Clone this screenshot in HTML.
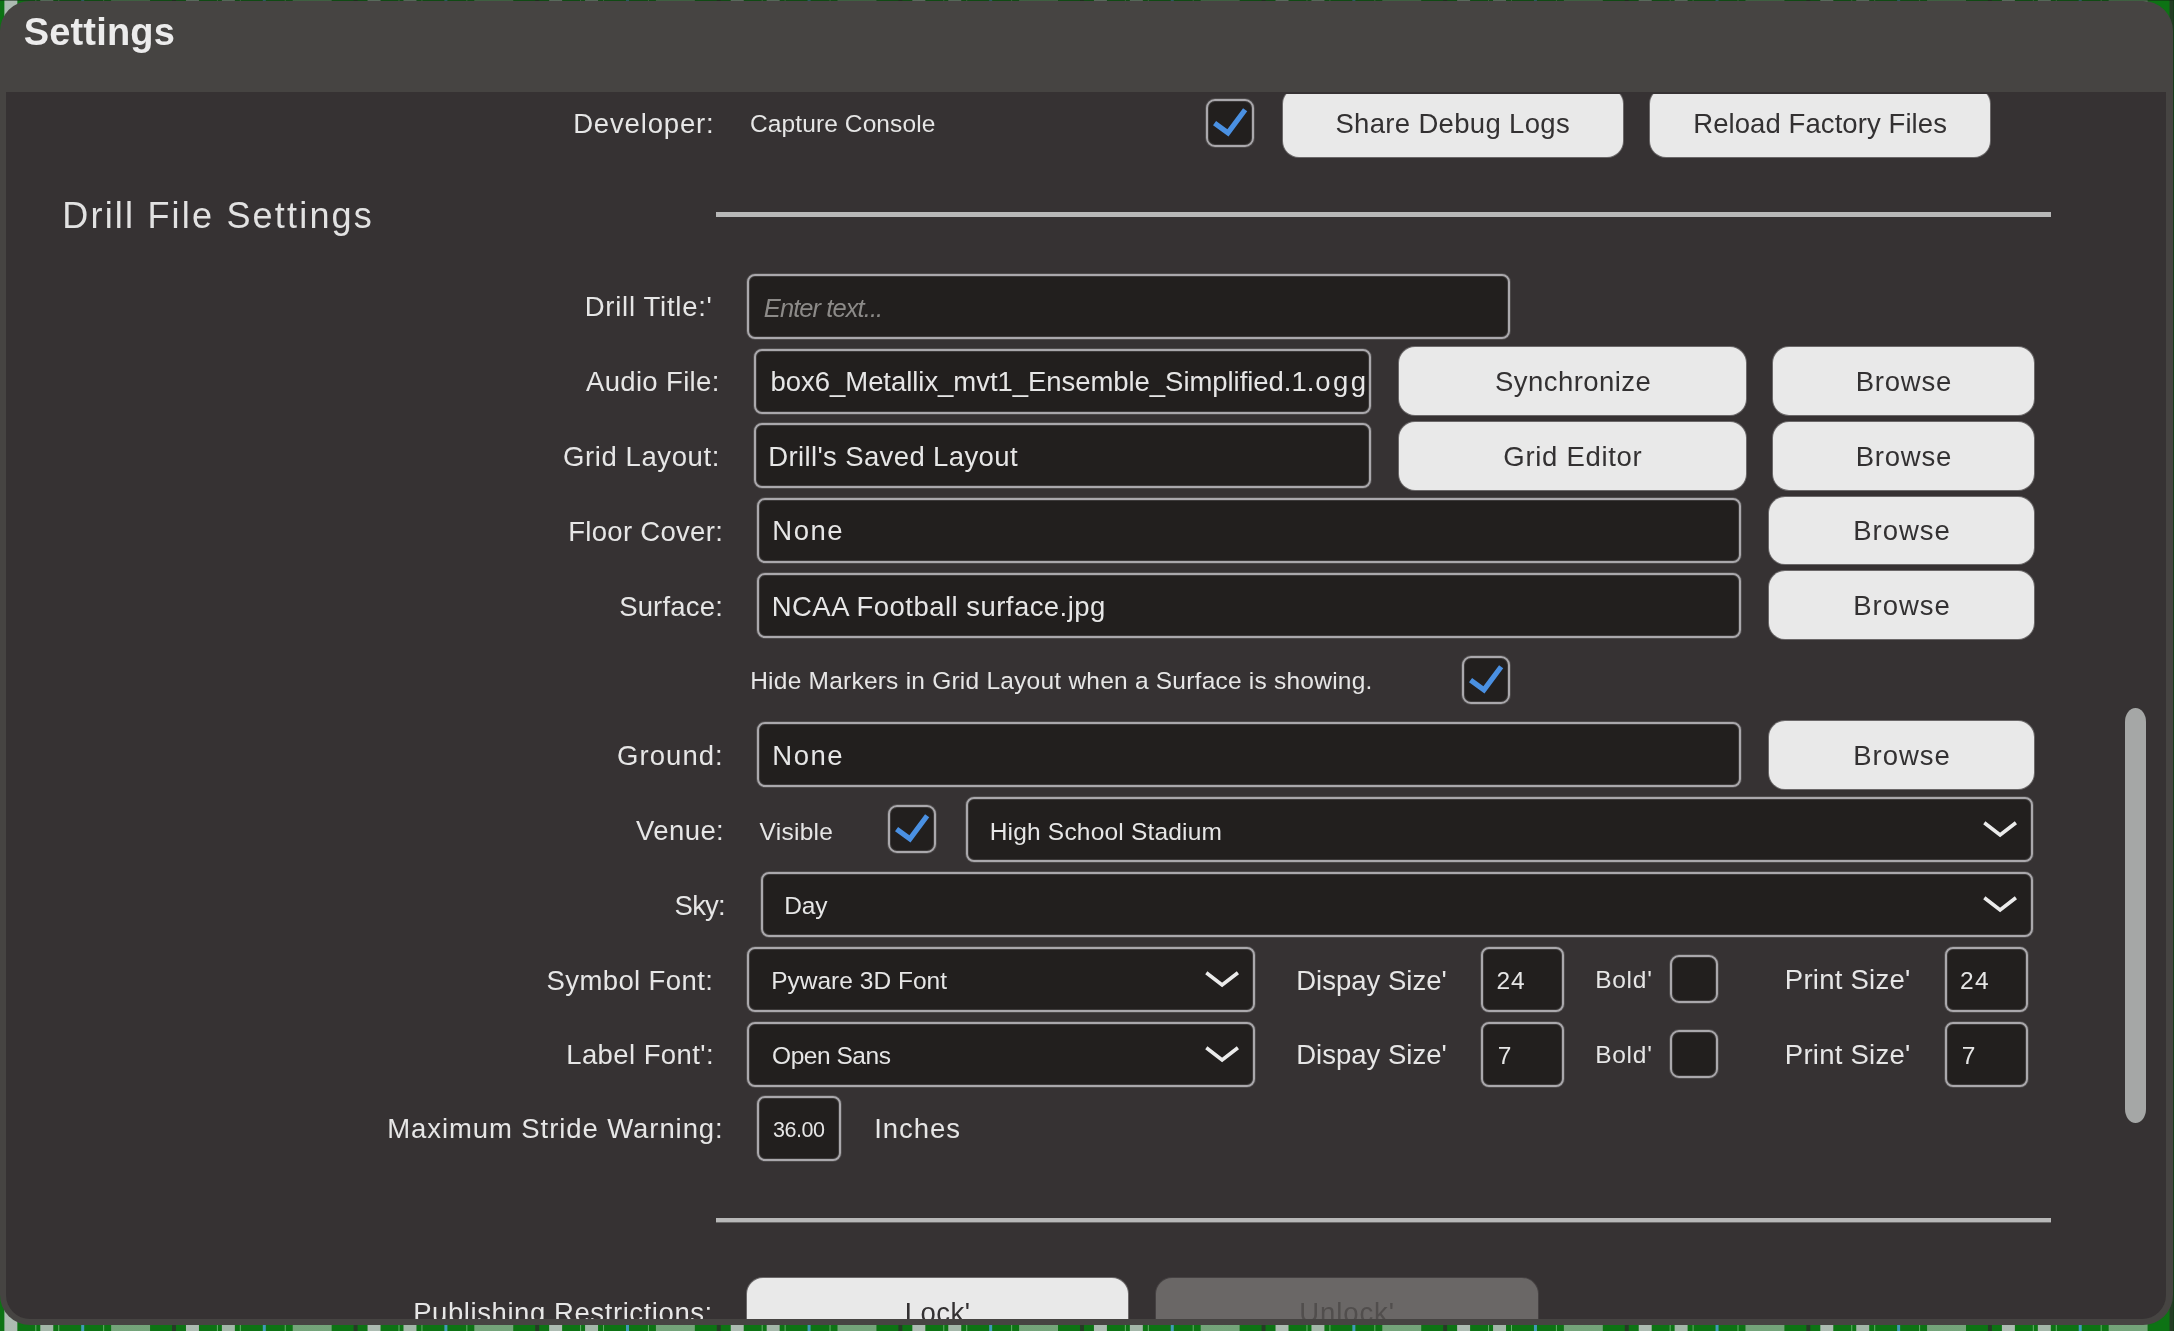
<!DOCTYPE html>
<html lang="en">
<head>
<meta charset="utf-8">
<title>Settings</title>
<style>
html,body{margin:0;padding:0}
body{width:2174px;height:1331px;overflow:hidden;position:relative;background:#12781a;font-family:"Liberation Sans",sans-serif}
#field{position:absolute;left:0;top:0;width:2174px;height:1331px;background-color:#0d7314;
 background-image:repeating-linear-gradient(90deg,transparent 0.0px,rgba(40,50,40,.85) 0.0px,rgba(40,50,40,.85) 3.5px,transparent 3.5px,transparent 14.0px,rgba(200,200,205,.85) 14.0px,rgba(200,200,205,.85) 27.0px,transparent 27.0px,transparent 44.9px,rgba(190,235,195,.5) 44.9px,rgba(190,235,195,.5) 46.1px,transparent 46.1px,transparent 50.0px,rgba(200,200,205,.8) 50.0px,rgba(200,200,205,.8) 63.0px,transparent 63.0px,transparent 67.6px,rgba(190,235,195,.5) 67.6px,rgba(190,235,195,.5) 68.8px,transparent 68.8px,transparent 90.8px,rgba(70,160,200,.9) 90.8px,rgba(70,160,200,.9) 93.5px,transparent 93.5px,transparent 113.0px,rgba(190,235,195,.5) 113.0px,rgba(190,235,195,.5) 114.2px,transparent 114.2px,transparent 121.0px,rgba(200,205,205,.55) 121.0px,rgba(200,205,205,.55) 160.0px,transparent 160.0px,transparent 181.6px);background-position:-9.6px 0;background-size:181.6px 100%}
#edgeT{position:absolute;left:0;top:0;width:2174px;height:1px;background:rgba(20,40,20,.55)}
#edgeR{position:absolute;left:2173px;top:0;width:1px;height:1331px;background:rgba(20,40,20,.55)}
#dlg{position:absolute;left:0;top:1px;width:2173px;height:1324px;background:#464442;border-radius:30px;overflow:hidden;will-change:transform}
#title{position:absolute;white-space:nowrap;line-height:60px;height:60px;font-weight:bold;color:#ececec}
#pane{position:absolute;left:6px;top:91px;width:2160px;height:1227px;background:#363233;border-radius:0 0 24px 24px;overflow:hidden}
#view{position:absolute;left:0;top:2px;width:2160px;height:1225px;overflow:hidden}
#abs{position:absolute;left:-6px;top:-94px;width:2174px;height:1331px}
.t{position:absolute;white-space:nowrap;line-height:60px;height:60px}
.in{position:absolute;box-sizing:border-box;background:#221f1e;border:2px solid #aaa8ac;border-radius:8px;box-shadow:0 0 0 1px rgba(170,168,172,.2),inset 0 0 0 1px rgba(170,168,172,.2)}
.clip{overflow:hidden}
.btn{position:absolute;background:#e9e9e9;border-radius:16px;box-shadow:0 0 0 1px rgba(233,233,233,.3)}
.dis{background:#6a6766;box-shadow:0 0 0 1px rgba(106,103,102,.3)}
.cb{position:absolute;box-sizing:border-box;background:#221f1e;border:2px solid #aaa8ac;border-radius:9px;box-shadow:0 0 0 1px rgba(170,168,172,.2),inset 0 0 0 1px rgba(170,168,172,.2)}
.cb svg{position:absolute;left:-2px;top:-2px}
.chev{position:absolute}
.hr{position:absolute;background:#b8b8b8}
.sb{position:absolute;background:#a5a7a6;border-radius:10.5px/14px}
</style>
</head>
<body>
<div id="field"></div><div id="edgeT"></div><div id="edgeR"></div>
<div id="dlg">
<span class="t" style="left:23.64px;top:0.93px;font-size:38px;letter-spacing:0.198px;color:#ececec;font-weight:bold;">Settings</span>
<div id="pane"><div id="view"><div id="abs">
<span class="t" style="left:573.18px;top:93.67px;font-size:27.5px;letter-spacing:0.840px;color:#e6e6e6;">Developer:</span>
<span class="t" style="left:750.06px;top:94.11px;font-size:24.5px;letter-spacing:0.102px;color:#e6e6e6;">Capture Console</span>
<div class="cb" style="left:1206px;top:99px;width:48px;height:48px;"><svg width="48" height="48" viewBox="0 0 48 48"><path d="M8.55 24.1 L21.95 33.8 L39.15 10.7" fill="none" stroke="#4a90e2" stroke-width="5.2" stroke-linejoin="miter"/></svg></div>
<div class="btn" style="left:1283px;top:88px;width:340px;height:69px;"></div>
<span class="t" style="left:1335.39px;top:93.67px;font-size:27.5px;letter-spacing:0.330px;color:#333132;">Share Debug Logs</span>
<div class="btn" style="left:1650px;top:88px;width:340px;height:69px;"></div>
<span class="t" style="left:1693.20px;top:93.67px;font-size:27.5px;letter-spacing:0.083px;color:#333132;">Reload Factory Files</span>
<div class="hr" style="left:716px;top:212px;width:1335px;height:5px;"></div>
<span class="t" style="left:62.28px;top:185.63px;font-size:36px;letter-spacing:2.194px;color:#e2e2e2;">Drill File Settings</span>
<span class="t" style="left:584.72px;top:277.17px;font-size:27.5px;letter-spacing:0.734px;color:#e6e6e6;">Drill Title:&#x27;</span>
<div class="in" style="left:747px;top:274px;width:763px;height:65px;"></div>
<span class="t" style="left:763.84px;top:278.36px;font-size:25.5px;letter-spacing:-0.923px;color:#8c8a88;font-style:italic;">Enter text...</span>
<span class="t" style="left:585.98px;top:352.27px;font-size:27.5px;letter-spacing:0.341px;color:#e6e6e6;">Audio File:</span>
<div class="in clip" style="left:754px;top:349px;width:617px;height:65px;"><span class="t" style="left:14.60px;top:1.27px;font-size:27.5px;letter-spacing:-0.050px;color:#e6e6e6;">box6_Metallix_mvt1_Ensemble_Simplified.1.</span><span class="t" style="left:559.30px;top:1.27px;font-size:27.5px;letter-spacing:2.400px;color:#e6e6e6;">ogg</span></div>
<div class="btn" style="left:1399px;top:347px;width:347px;height:68px;"></div>
<span class="t" style="left:1495.06px;top:351.97px;font-size:27.5px;letter-spacing:0.447px;color:#333132;">Synchronize</span>
<div class="btn" style="left:1773px;top:347px;width:261px;height:68px;"></div>
<span class="t" style="left:1855.68px;top:351.97px;font-size:27.5px;letter-spacing:0.794px;color:#333132;">Browse</span>
<span class="t" style="left:563.08px;top:426.57px;font-size:27.5px;letter-spacing:0.585px;color:#e6e6e6;">Grid Layout:</span>
<div class="in" style="left:754px;top:423px;width:617px;height:65px;"></div>
<span class="t" style="left:768.20px;top:426.57px;font-size:27.5px;letter-spacing:0.378px;color:#e6e6e6;">Drill&#x27;s Saved Layout</span>
<div class="btn" style="left:1399px;top:422px;width:347px;height:68px;"></div>
<span class="t" style="left:1503.35px;top:426.77px;font-size:27.5px;letter-spacing:0.698px;color:#333132;">Grid Editor</span>
<div class="btn" style="left:1773px;top:422px;width:261px;height:68px;"></div>
<span class="t" style="left:1855.68px;top:426.77px;font-size:27.5px;letter-spacing:0.794px;color:#333132;">Browse</span>
<span class="t" style="left:568.22px;top:501.77px;font-size:27.5px;letter-spacing:0.299px;color:#e6e6e6;">Floor Cover:</span>
<div class="in" style="left:757px;top:498px;width:984px;height:65px;"></div>
<span class="t" style="left:772.32px;top:501.27px;font-size:27.5px;letter-spacing:1.503px;color:#e6e6e6;">None</span>
<div class="btn" style="left:1769px;top:497px;width:265px;height:67px;"></div>
<span class="t" style="left:1853.24px;top:501.47px;font-size:27.5px;letter-spacing:0.970px;color:#333132;">Browse</span>
<span class="t" style="left:619.14px;top:576.97px;font-size:27.5px;letter-spacing:0.178px;color:#e6e6e6;">Surface:</span>
<div class="in" style="left:757px;top:573px;width:984px;height:65px;"></div>
<span class="t" style="left:771.72px;top:576.77px;font-size:27.5px;letter-spacing:0.462px;color:#e6e6e6;">NCAA Football surface.jpg</span>
<div class="btn" style="left:1769px;top:571px;width:265px;height:68px;"></div>
<span class="t" style="left:1853.24px;top:576.47px;font-size:27.5px;letter-spacing:0.970px;color:#333132;">Browse</span>
<span class="t" style="left:750.20px;top:650.81px;font-size:24.5px;letter-spacing:0.228px;color:#e6e6e6;">Hide Markers in Grid Layout when a Surface is showing.</span>
<div class="cb" style="left:1462px;top:656px;width:48px;height:48px;"><svg width="48" height="48" viewBox="0 0 48 48"><path d="M8.55 24.1 L21.95 33.8 L39.15 10.7" fill="none" stroke="#4a90e2" stroke-width="5.2" stroke-linejoin="miter"/></svg></div>
<span class="t" style="left:617.08px;top:725.77px;font-size:27.5px;letter-spacing:1.051px;color:#e6e6e6;">Ground:</span>
<div class="in" style="left:757px;top:722px;width:984px;height:65px;"></div>
<span class="t" style="left:772.32px;top:725.67px;font-size:27.5px;letter-spacing:1.503px;color:#e6e6e6;">None</span>
<div class="btn" style="left:1769px;top:721px;width:265px;height:68px;"></div>
<span class="t" style="left:1853.24px;top:725.77px;font-size:27.5px;letter-spacing:0.970px;color:#333132;">Browse</span>
<span class="t" style="left:635.96px;top:800.57px;font-size:27.5px;letter-spacing:0.431px;color:#e6e6e6;">Venue:</span>
<span class="t" style="left:759.54px;top:801.51px;font-size:24.5px;letter-spacing:0.268px;color:#e6e6e6;">Visible</span>
<div class="cb" style="left:888px;top:805px;width:48px;height:48px;"><svg width="48" height="48" viewBox="0 0 48 48"><path d="M8.55 24.1 L21.95 33.8 L39.15 10.7" fill="none" stroke="#4a90e2" stroke-width="5.2" stroke-linejoin="miter"/></svg></div>
<div class="in" style="left:966px;top:797px;width:1067px;height:65px;"></div>
<span class="t" style="left:989.70px;top:801.51px;font-size:24.5px;letter-spacing:0.193px;color:#e6e6e6;">High School Stadium</span>
<svg class="chev" style="left:1980px;top:816.5px" width="40" height="24" viewBox="0 0 40 24"><path d="M4.3 5.8 L20.1 17.9 L35.9 5.8" fill="none" stroke="#ebebeb" stroke-width="3.6" stroke-linejoin="miter"/></svg>
<span class="t" style="left:674.58px;top:875.77px;font-size:27.5px;letter-spacing:-0.787px;color:#e6e6e6;">Sky:</span>
<div class="in" style="left:761px;top:872px;width:1272px;height:65px;"></div>
<span class="t" style="left:784.20px;top:875.51px;font-size:24.5px;letter-spacing:-0.162px;color:#e6e6e6;">Day</span>
<svg class="chev" style="left:1980px;top:891.5px" width="40" height="24" viewBox="0 0 40 24"><path d="M4.3 5.8 L20.1 17.9 L35.9 5.8" fill="none" stroke="#ebebeb" stroke-width="3.6" stroke-linejoin="miter"/></svg>
<span class="t" style="left:546.60px;top:950.67px;font-size:27.5px;letter-spacing:0.384px;color:#e6e6e6;">Symbol Font:</span>
<div class="in" style="left:747px;top:947px;width:508px;height:65px;"></div>
<span class="t" style="left:771.14px;top:950.51px;font-size:24.5px;letter-spacing:0.020px;color:#e6e6e6;">Pyware 3D Font</span>
<svg class="chev" style="left:1202px;top:966.5px" width="40" height="24" viewBox="0 0 40 24"><path d="M4.3 5.8 L20.1 17.9 L35.9 5.8" fill="none" stroke="#ebebeb" stroke-width="3.6" stroke-linejoin="miter"/></svg>
<span class="t" style="left:1296.20px;top:950.67px;font-size:27.5px;letter-spacing:0.018px;color:#e6e6e6;">Dispay Size&#x27;</span>
<div class="in" style="left:1481px;top:947px;width:83px;height:65px;"></div>
<span class="t" style="left:1496.50px;top:950.81px;font-size:24.5px;letter-spacing:0.810px;color:#e6e6e6;">24</span>
<span class="t" style="left:1595.16px;top:949.51px;font-size:24.5px;letter-spacing:0.748px;color:#e6e6e6;">Bold&#x27;</span>
<div class="cb" style="left:1670px;top:955px;width:48px;height:48px;"></div>
<span class="t" style="left:1784.86px;top:950.27px;font-size:27.5px;letter-spacing:0.240px;color:#e6e6e6;">Print Size&#x27;</span>
<div class="in" style="left:1945px;top:947px;width:83px;height:65px;"></div>
<span class="t" style="left:1960.10px;top:950.81px;font-size:24.5px;letter-spacing:1.190px;color:#e6e6e6;">24</span>
<span class="t" style="left:566.16px;top:1024.97px;font-size:27.5px;letter-spacing:0.426px;color:#e6e6e6;">Label Font&#x27;:</span>
<div class="in" style="left:747px;top:1022px;width:508px;height:65px;"></div>
<span class="t" style="left:772.04px;top:1025.51px;font-size:24.5px;letter-spacing:-0.463px;color:#e6e6e6;">Open Sans</span>
<svg class="chev" style="left:1202px;top:1041.5px" width="40" height="24" viewBox="0 0 40 24"><path d="M4.3 5.8 L20.1 17.9 L35.9 5.8" fill="none" stroke="#ebebeb" stroke-width="3.6" stroke-linejoin="miter"/></svg>
<span class="t" style="left:1296.20px;top:1025.47px;font-size:27.5px;letter-spacing:0.018px;color:#e6e6e6;">Dispay Size&#x27;</span>
<div class="in" style="left:1481px;top:1022px;width:83px;height:65px;"></div>
<span class="t" style="left:1497.80px;top:1025.51px;font-size:24.5px;letter-spacing:0.000px;color:#e6e6e6;">7</span>
<span class="t" style="left:1595.16px;top:1024.51px;font-size:24.5px;letter-spacing:0.748px;color:#e6e6e6;">Bold&#x27;</span>
<div class="cb" style="left:1670px;top:1030px;width:48px;height:48px;"></div>
<span class="t" style="left:1784.86px;top:1025.07px;font-size:27.5px;letter-spacing:0.240px;color:#e6e6e6;">Print Size&#x27;</span>
<div class="in" style="left:1945px;top:1022px;width:83px;height:65px;"></div>
<span class="t" style="left:1961.80px;top:1025.51px;font-size:24.5px;letter-spacing:0.000px;color:#e6e6e6;">7</span>
<span class="t" style="left:387.20px;top:1099.37px;font-size:27.5px;letter-spacing:0.918px;color:#e6e6e6;">Maximum Stride Warning:</span>
<div class="in" style="left:757px;top:1096px;width:84px;height:65px;"></div>
<span class="t" style="left:773.08px;top:1100.05px;font-size:21.5px;letter-spacing:-0.472px;color:#e6e6e6;">36.00</span>
<span class="t" style="left:874.28px;top:1099.37px;font-size:27.5px;letter-spacing:0.936px;color:#e6e6e6;">Inches</span>
<div class="hr" style="left:716px;top:1218px;width:1335px;height:4px;box-shadow:0 1px 0 rgba(184,184,184,.4);"></div>
<span class="t" style="left:413.20px;top:1282.77px;font-size:27.5px;letter-spacing:0.576px;color:#e6e6e6;">Publishing Restrictions:</span>
<div class="btn" style="left:747px;top:1278px;width:381px;height:69px;"></div>
<span class="t" style="left:904.70px;top:1282.77px;font-size:27.5px;letter-spacing:0.471px;color:#333132;">Lock&#x27;</span>
<div class="btn dis" style="left:1156px;top:1278px;width:382px;height:69px;"></div>
<span class="t" style="left:1299.20px;top:1282.77px;font-size:27.5px;letter-spacing:0.908px;color:#514e4d;">Unlock&#x27;</span>
<div class="sb" style="left:2125px;top:708px;width:21px;height:415px;"></div>
</div></div></div>
</div>
</body>
</html>
